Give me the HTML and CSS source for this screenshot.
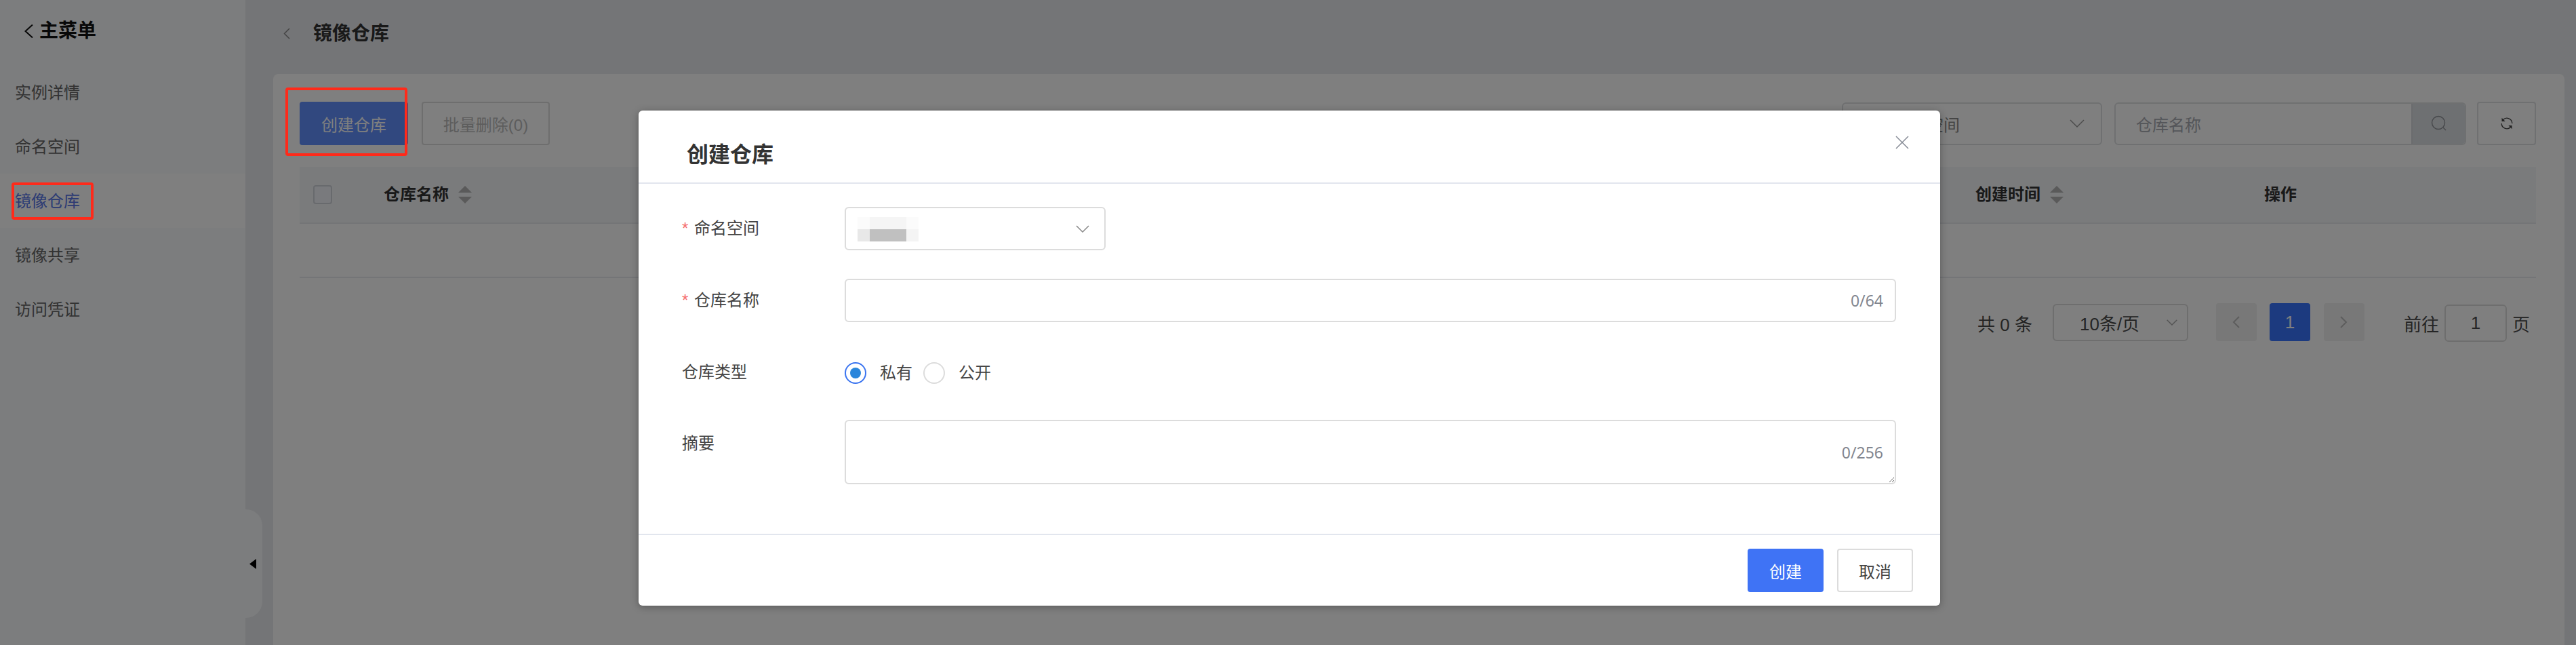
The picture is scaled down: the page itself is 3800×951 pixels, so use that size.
FILE: index.html
```html
<!DOCTYPE html>
<html lang="zh-CN">
<head>
<meta charset="utf-8">
<title>镜像仓库</title>
<link rel="stylesheet" href="styles.css">
</head>
<body>
<div class="app">
  <aside class="sidebar">
    <div class="side-head">
      <svg class="side-back" width="13" height="20" viewBox="0 0 13 20"><path d="M12 .5 1.500 10 12 19.500" fill="none" stroke="#111" stroke-width="2"/></svg>
      <span class="side-title">主菜单</span>
    </div>
    <nav class="menu">
      <div class="menu-item">实例详情</div>
      <div class="menu-item">命名空间</div>
      <div class="menu-item is-active">镜像仓库</div>
      <div class="menu-item">镜像共享</div>
      <div class="menu-item">访问凭证</div>
    </nav>
    <div class="collapse">
      <svg width="10" height="15" viewBox="0 0 10 15"><path d="M10 0 0 7.500 10 15Z" fill="#000"/></svg>
    </div>
  </aside>
  <main class="main">
    <header class="page-head">
      <svg class="page-back" width="10" height="17" viewBox="0 0 10 17"><path d="M9 1 1.500 8.500 9 16" fill="none" stroke="#888" stroke-width="1.500"/></svg>
      <h1 class="page-title">镜像仓库</h1>
    </header>
    <section class="card">
      <div class="toolbar">
        <button class="btn btn-primary btn-create">创建仓库</button>
        <button class="btn btn-disabled">批量删除(0)</button>
        <div class="spacer"></div>
        <div class="ns-filter">
          <span class="ns-filter-text">全部命名空间</span>
          <svg width="22" height="12" viewBox="0 0 22 12"><path d="M1 1 11 11 21 1" fill="none" stroke="#999" stroke-width="1.500"/></svg>
        </div>
        <div class="search">
          <span class="search-text">仓库名称</span>
          <span class="search-btn">
            <svg width="24" height="24" viewBox="0 0 24 24"><circle cx="11" cy="11" r="9.500" fill="none" stroke="#909399" stroke-width="1.500"/><path d="m18 18 4 4" stroke="#909399" stroke-width="1.500"/></svg>
          </span>
        </div>
        <button class="btn-refresh">
          <svg width="20" height="20" viewBox="0 0 20 20"><path d="M4.500 4.500A7.800 7.800 0 0 1 17.800 10M15.500 15.500A7.800 7.800 0 0 1 2.200 10" fill="none" stroke="#444" stroke-width="1.400"/><path d="M2.500 1.800v5.200h5.200zM17.500 18.200V13h-5.200z" fill="#444"/></svg>
        </button>
      </div>
      <div class="table-head">
        <span class="check"></span>
        <span class="th th-name">仓库名称<span class="sort"><i class="sort-up"></i><i class="sort-down"></i></span></span>
        <span class="th th-time">创建时间<span class="sort"><i class="sort-up"></i><i class="sort-down"></i></span></span>
        <span class="th">操作</span>
      </div>
      <div class="table-row"></div>
      <div class="pager">
        <span class="pager-total">共 0 条</span>
        <div class="pager-size">
          <span>10条/页</span>
          <svg width="16" height="9" viewBox="0 0 16 9"><path d="M.7.7 8 8 15.300.7" fill="none" stroke="#aaa" stroke-width="1.500"/></svg>
        </div>
        <span class="page-btn page-prev"><svg width="11" height="18" viewBox="0 0 11 18"><path d="M10 1 2 9l8 8" fill="none" stroke="#bbb" stroke-width="2"/></svg></span>
        <span class="page-btn page-current">1</span>
        <span class="page-btn"><svg width="11" height="18" viewBox="0 0 11 18"><path d="M1 1l8 8-8 8" fill="none" stroke="#bbb" stroke-width="2"/></svg></span>
        <span class="goto-label">前往</span>
        <span class="goto-input">1</span>
        <span class="goto-unit">页</span>
      </div>
    </section>
  </main>
</div>

<div class="mask"></div>

<div class="mark mark-btn"></div>
<div class="mark mark-menu"></div>

<div class="modal">
  <div class="modal-head">
    <h2 class="modal-title">创建仓库</h2>
    <svg width="20" height="20" viewBox="0 0 20 20"><path d="M1 1l18 18M19 1 1 19" stroke="#868b95" stroke-width="1.500"/></svg>
  </div>
  <div class="modal-body">
    <div class="form-row">
      <label class="form-label"><span class="star">*</span>命名空间</label>
      <div class="select">
        <div class="mosaic">
          <span class="tile t1"></span><span class="tile t2"></span><span class="tile t1"></span>
          <span class="tile t3"></span><span class="tile t4"></span><span class="tile t5"></span>
        </div>
        <svg width="20" height="11" viewBox="0 0 20 11"><path d="M1 1l9 9 9-9" fill="none" stroke="#888" stroke-width="1.500"/></svg>
      </div>
    </div>
    <div class="form-row">
      <label class="form-label"><span class="star">*</span>仓库名称</label>
      <div class="field">
        <input class="input" type="text">
        <span class="count">0/64</span>
      </div>
    </div>
    <div class="form-row form-row-radio">
      <label class="form-label">仓库类型</label>
      <div class="radios">
        <span class="radio radio-on"></span><span class="radio-text">私有</span>
        <span class="radio"></span><span class="radio-text">公开</span>
      </div>
    </div>
    <div class="form-row form-row-top">
      <label class="form-label">摘要</label>
      <div class="field">
        <textarea class="textarea"></textarea>
        <span class="count count-area">0/256</span>
      </div>
    </div>
  </div>
  <div class="modal-foot">
    <button class="btn btn-ok">创建</button>
    <button class="btn btn-cancel">取消</button>
  </div>
</div>
</body>
</html>
```
FILE: styles.css
```css
* { box-sizing: border-box; }
html, body { margin: 0; padding: 0; }
body {
  width: 3800px;
  height: 951px;
  overflow: hidden;
  position: relative;
  font-family: "Liberation Sans", "Noto Sans CJK SC", sans-serif;
  font-size: 24px;
  color: #666;
  background: #e8eaee;
}
h1, h2 { margin: 0; }
button { font-family: inherit; font-size: 24px; cursor: pointer; }

.app { display: flex; height: 951px; }

/* Sidebar */
.sidebar {
  width: 362px;
  flex: none;
  background: #f8fafc;
  position: relative;
}
.side-head {
  height: 96px;
  padding: 2px 0 6px 36px;
  display: flex;
  align-items: center;
  gap: 9px;
}
.side-title { font-size: 28px; font-weight: 700; color: #111; line-height: 40px; }
.menu-item {
  height: 80px;
  padding: 2px 0 0 22px;
  display: flex;
  align-items: center;
  line-height: 32px;
}
.menu-item.is-active { background: #ffffff; color: #5876e8; }
.collapse {
  position: absolute;
  left: 362px;
  top: 751px;
  width: 25px;
  height: 160px;
  background: #f8fafc;
  border-radius: 0 24px 24px 0;
  padding-left: 6px;
  display: flex;
  align-items: center;
}

/* Main */
.main { flex: 1; min-width: 0; display: flex; flex-direction: column; }
.page-head {
  height: 109px;
  padding: 0 0 10px 56px;
  display: flex;
  align-items: center;
  gap: 34px;
}
.page-title { font-size: 28px; font-weight: 700; color: #333; line-height: 40px; }
.card {
  flex: 1;
  margin: 0 17px 0 41px;
  padding: 41px 42px 0 39px;
  background: #fff;
  border-radius: 8px 8px 0 0;
}

.toolbar { display: flex; align-items: center; height: 64px; }
.spacer { flex: 1; }
.btn {
  height: 64px;
  border-radius: 4px;
  border: 2px solid #dcdcdc;
  background: #fff;
  padding: 0;
}
.btn-primary { background: #6290ff; border-color: #6290ff; color: #fff; width: 160px; }
.btn-disabled { width: 189px; margin-left: 20px; color: #bbb; }

.ns-filter {
  width: 384px;
  height: 63px;
  border: 2px solid #dee0e3;
  border-radius: 6px;
  padding: 0 24px 0 28px;
  display: flex;
  align-items: center;
  justify-content: space-between;
}
.ns-filter-text { color: #888; }
.search {
  width: 519px;
  height: 63px;
  margin-left: 18px;
  border: 2px solid #dee0e3;
  border-radius: 6px;
  padding-left: 30px;
  display: flex;
  align-items: center;
  justify-content: space-between;
  overflow: hidden;
}
.search-text { color: #a8abb2; }
.search-btn {
  width: 79px;
  height: 100%;
  background: #dde0e4;
  border-left: 2px solid #d6d8dc;
  display: flex;
  align-items: center;
  justify-content: center;
}
.btn-refresh {
  width: 87px;
  height: 64px;
  margin-left: 16px;
  padding: 0;
  background: #fff;
  border: 2px solid #dee0e3;
  border-radius: 4px;
  display: flex;
  align-items: center;
  justify-content: center;
}

/* Table */
.table-head {
  margin-top: 32px;
  height: 84px;
  background: #f4f6f9;
  border-bottom: 2px solid #e8eaee;
  display: grid;
  grid-template-columns: 124px 2348px 426px 1fr;
  align-items: center;
}
.check {
  width: 28px;
  height: 28px;
  margin-left: 20px;
  background: #f2f5fa;
  border: 2px solid #d0d4da;
  border-radius: 4px;
}
.th { font-weight: 700; color: #333; display: flex; align-items: center; line-height: 32px; }
.sort { display: flex; flex-direction: column; gap: 6px; margin-left: 14px; }
.sort i { display: block; width: 0; height: 0; border-left: 10px solid transparent; border-right: 10px solid transparent; }
.sort-up { border-bottom: 10px solid #b4b4b4; }
.sort-down { border-top: 10px solid #b4b4b4; }
.table-row { height: 80px; border-bottom: 2px solid #e8eaee; }

/* Pager */
.pager {
  margin-top: 37px;
  height: 58px;
  padding-right: 9px;
  display: flex;
  align-items: center;
  justify-content: flex-end;
  color: #4a4a4a;
  font-size: 26px;
}
.pager-size {
  width: 200px;
  height: 55px;
  margin: 0 0 1px 30px;
  border: 2px solid #dcdcdc;
  border-radius: 6px;
  padding: 0 14px 0 38px;
  display: flex;
  align-items: center;
  justify-content: space-between;
}
.page-btn {
  width: 60px;
  height: 56px;
  margin: 0 0 2px 20px;
  background: #f0f0f0;
  border-radius: 4px;
  display: flex;
  align-items: center;
  justify-content: center;
}
.page-prev { margin-left: 41px; }
.page-current { background: #3874ff; color: #fff; margin-left: 19px; }
.goto-label { margin-left: 58px; }
.goto-input {
  width: 92px;
  height: 55px;
  margin: 1px 8px 0;
  border: 2px solid #dcdcdc;
  border-radius: 6px;
  display: flex;
  align-items: center;
  justify-content: center;
}

/* Mask */
.mask {
  position: absolute;
  inset: 0;
  background: rgba(0, 0, 0, 0.5);
}

/* Annotations */
.mark {
  position: absolute;
  border: 4px solid #ff2a1a;
  border-radius: 4px;
}
.mark-btn { left: 421px; top: 129px; width: 180px; height: 101px; }
.mark-menu { left: 17px; top: 269px; width: 121px; height: 55px; }

/* Modal */
.modal {
  position: absolute;
  left: 942px;
  top: 163px;
  width: 1920px;
  height: 730px;
  background: #fff;
  border-radius: 6px;
  box-shadow: 0 2px 12px rgba(0, 0, 0, 0.3);
  display: flex;
  flex-direction: column;
  color: #444;
}
.modal-head {
  height: 108px;
  flex: none;
  padding: 0 46px 0 71px;
  border-bottom: 2px solid #e2e6ee;
  display: flex;
  align-items: center;
  justify-content: space-between;
}
.modal-title { font-size: 32px; font-weight: 700; color: #333; line-height: 44px; margin-top: 24px; }
.modal-head svg { margin-top: -12px; }
.modal-body { flex: 1; padding: 34px 65px 0 64px; }
.form-row { display: flex; align-items: center; margin-bottom: 42px; }
.form-row-radio { height: 66px; margin-bottom: 36px; }
.form-row-top { align-items: flex-start; margin-bottom: 0; }
.form-label { width: 240px; flex: none; display: flex; line-height: 32px; }
.form-row-radio .form-label { margin-bottom: 2px; }
.form-row-top .form-label { line-height: 69px; }
.star { width: 18px; flex: none; color: #f56c6c; }
.select {
  width: 385px;
  height: 64px;
  border: 2px solid #dcdcdc;
  border-radius: 6px;
  padding: 0 22px 0 17px;
  display: flex;
  align-items: center;
  justify-content: space-between;
}
.mosaic { display: grid; grid-template-columns: 18px 54px 18px; grid-template-rows: 18px 18px; margin-top: 2px; }
.t1 { background: #fbfbfb; }
.t2 { background: #f5f5f5; }
.t3 { background: #e8e8e8; }
.t4 { background: #c0c0c0; }
.t5 { background: #f4f4f4; }
.field { flex: 1; position: relative; display: flex; }
.input, .textarea {
  width: 100%;
  display: block;
  border: 2px solid #dcdcdc;
  border-radius: 6px;
  background: #fff;
  outline: none;
  margin: 0;
  font-family: inherit;
}
.input { height: 64px; }
.textarea { height: 95px; resize: both; }
.count {
  position: absolute;
  right: 19px;
  top: 16px;
  font-family: "Noto Sans", sans-serif;
  font-size: 23px;
  line-height: 32px;
  color: #82868f;
}
.count-area { top: 32px; }
.radios { display: flex; align-items: center; }
.radio {
  width: 32px;
  height: 32px;
  border: 2px solid #dcdcdc;
  border-radius: 50%;
  display: flex;
  align-items: center;
  justify-content: center;
}
.radio-on { border-color: #3a74f0; }
.radio-on::after {
  content: "";
  width: 16px;
  height: 16px;
  border-radius: 50%;
  background: #2a86db;
}
.radio-text { margin: 0 16px 0 20px; line-height: 32px; }
.modal-foot {
  height: 106px;
  flex: none;
  border-top: 2px solid #e2e6ee;
  padding: 20px 40px 0 0;
  display: flex;
  justify-content: flex-end;
  gap: 20px;
  align-items: flex-start;
}
.btn-ok { width: 112px; background: #3f73f5; border-color: #3f73f5; color: #fff; }
.btn-cancel { width: 112px; color: #444; }
```
